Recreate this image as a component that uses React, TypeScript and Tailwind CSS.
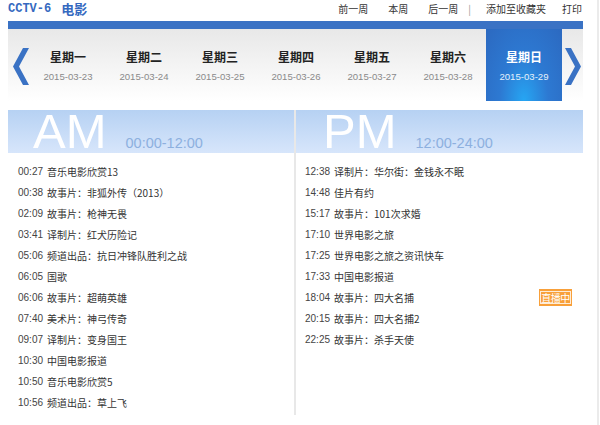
import React from 'react';

const days = [
  { name: '星期一', date: '2015-03-23' },
  { name: '星期二', date: '2015-03-24' },
  { name: '星期三', date: '2015-03-25' },
  { name: '星期四', date: '2015-03-26' },
  { name: '星期五', date: '2015-03-27' },
  { name: '星期六', date: '2015-03-28' },
  { name: '星期日', date: '2015-03-29' },
];

const amList = [
  ['00:27', '音乐电影欣赏13'],
  ['00:38', '故事片：非狐外传（2013）'],
  ['02:09', '故事片：枪神无畏'],
  ['03:41', '译制片：红犬历险记'],
  ['05:06', '频道出品：抗日冲锋队胜利之战'],
  ['06:05', '国歌'],
  ['06:06', '故事片：超萌英雄'],
  ['07:40', '美术片：神弓传奇'],
  ['09:07', '译制片：变身国王'],
  ['10:30', '中国电影报道'],
  ['10:50', '音乐电影欣赏5'],
  ['10:56', '频道出品：草上飞'],
];

const pmList = [
  ['12:38', '译制片：华尔街：金钱永不眠'],
  ['14:48', '佳片有约'],
  ['15:17', '故事片：101次求婚'],
  ['17:10', '世界电影之旅'],
  ['17:25', '世界电影之旅之资讯快车'],
  ['17:33', '中国电影报道'],
  ['18:04', '故事片：四大名捕', true],
  ['20:15', '故事片：四大名捕2'],
  ['22:25', '故事片：杀手天使'],
] as const;

const cjk = "font-['Noto_Sans_CJK_SC',sans-serif]";

function Chevron({ dir }: { dir: 'left' | 'right' }) {
  const pts = dir === 'left' ? '16,0 6,18.5 16,37 10,37 0,18.5 10,0' : '0,0 10,18.5 0,37 6,37 16,18.5 6,0';
  return (
    <svg width="16" height="37" viewBox="0 0 16 37">
      <polygon points={pts} fill="#3a72c4" />
    </svg>
  );
}

function Row({ time, title, live }: { time: string; title: string; live?: boolean }) {
  return (
    <div className="flex h-[21px] items-center">
      <span className="w-[26px] font-['Liberation_Sans',sans-serif] text-[10px] text-[#444]">{time}</span>
      <span className={`${cjk} ml-[3px] text-[10px] leading-[21px] text-[#333]`}>{title}</span>
      {live && (
        <span className="ml-auto mr-[11px] flex h-[17px] w-[33px] items-center justify-center bg-[#f8a03a]">
          <span className={`${cjk} flex h-[13px] w-[31px] items-center justify-center border border-white/80 text-[10px] leading-none tracking-[-0.5px] text-white`}>
            直播中
          </span>
        </span>
      )}
    </div>
  );
}

export default function App() {
  return (
    <div className="h-[425px] w-[599px] border-r-2 border-[#ebebeb] bg-white">
      <div className="ml-[8px] w-[575px]">
        {/* Header */}
        <div className="flex h-[21px] items-start justify-between pt-[2px]">
          <div className="flex items-center leading-[14px] text-[#3569c0]">
            <span className="font-['Liberation_Mono',monospace] text-[12px] font-bold">CCTV-6</span>
            <span className={`${cjk} ml-[10px] text-[13px] font-bold`}>电影</span>
          </div>
          <div className={`${cjk} flex items-center text-[10px] leading-[14px] text-[#333]`}>
            <span>前一周</span>
            <span className="ml-[20px]">本周</span>
            <span className="ml-[20px]">后一周</span>
            <span className="ml-[10px] text-[#999]">|</span>
            <span className="ml-[15px]">添加至收藏夹</span>
            <span className="ml-[16px] mr-[1px]">打印</span>
          </div>
        </div>

        {/* Blue bar */}
        <div className="h-[8px] bg-[#3a72c4]" />

        {/* Day selector */}
        <div className="flex h-[72px] bg-gradient-to-b from-[#e8e8e8] to-white">
          <div className="flex w-[22px] items-center pl-[5px] pt-[2px]">
            <Chevron dir="left" />
          </div>
          {days.map((d, i) => {
            const active = i === 6;
            return (
              <div
                key={d.name}
                className={`flex w-[76px] flex-col items-center pt-[20px] ${
                  active
                    ? 'bg-[radial-gradient(ellipse_at_50%_100%,#26a6f3_0%,#2d79d2_45%,#2c69c0_100%)] text-white'
                    : ''
                }`}
              >
                <span className={`${cjk} text-[12px] font-bold leading-[16px] ${active ? 'text-white' : 'text-[#222]'}`}>
                  {d.name}
                </span>
                <span
                  className={`mt-[6px] font-['Liberation_Sans',sans-serif] text-[9.6px] leading-[12px] ${
                    active ? 'text-[#e6f0fb]' : 'text-[#8a8a8a]'
                  }`}
                >
                  {d.date}
                </span>
              </div>
            );
          })}
          <div className="flex flex-1 items-center pl-[3px] pt-[2px]">
            <Chevron dir="right" />
          </div>
        </div>

        {/* Schedule */}
        <div className="mt-[9px] flex">
          <div className="w-[288px] border-r-2 border-[#e8e8e8] pb-[2px]">
            <div className="flex h-[43px] items-baseline bg-gradient-to-b from-[#b6d1f3] to-[#d7e6fb] pl-[25px] font-['Liberation_Sans',sans-serif]">
              <span className="text-[49px] leading-[43px] text-white">AM</span>
              <span className="ml-[19px] text-[14.5px] text-[#8db0df]">00:00-12:00</span>
            </div>
            <div className="pl-[10px] pt-[8px]">
              {amList.map(([t, n]) => (
                <Row key={t} time={t} title={n} />
              ))}
            </div>
          </div>
          <div className="flex-1">
            <div className="flex h-[43px] items-baseline bg-gradient-to-b from-[#b6d1f3] to-[#d7e6fb] pl-[27px] font-['Liberation_Sans',sans-serif]">
              <span className="text-[49px] leading-[43px] text-white">PM</span>
              <span className="ml-[19px] text-[14.5px] text-[#8db0df]">12:00-24:00</span>
            </div>
            <div className="pl-[9px] pt-[8px]">
              {pmList.map(([t, n, live]) => (
                <Row key={t} time={t} title={n} live={!!live} />
              ))}
            </div>
          </div>
        </div>
      </div>
    </div>
  );
}
